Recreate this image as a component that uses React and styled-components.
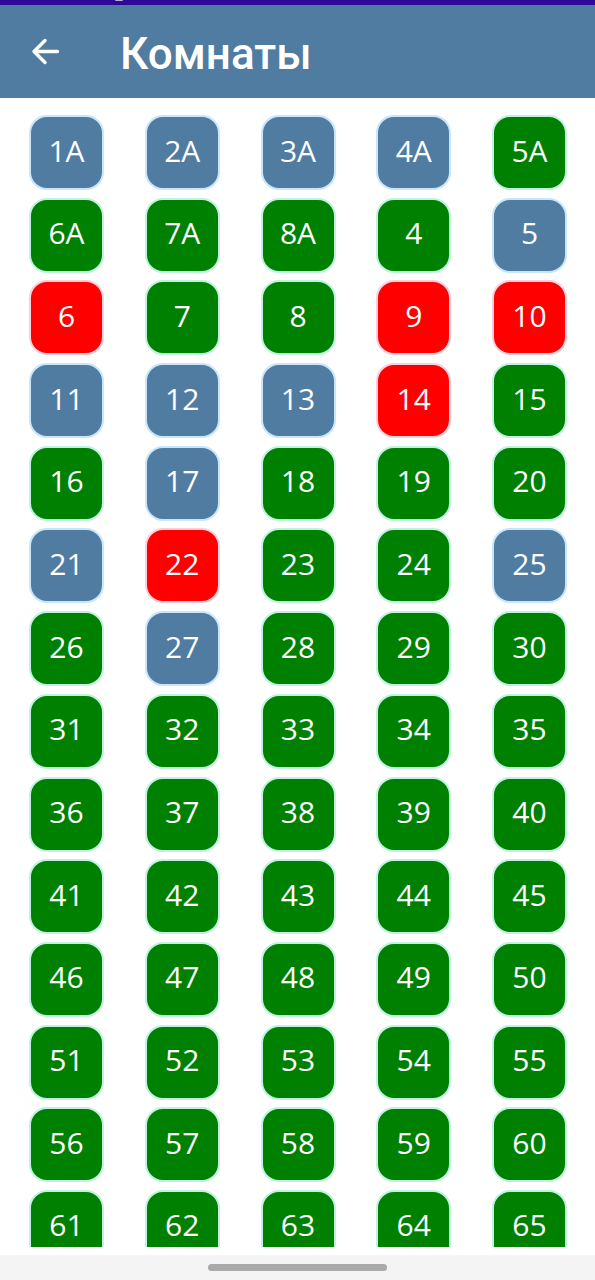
import React from "react";
import styled, { createGlobalStyle } from "styled-components";

const GlobalStyle = createGlobalStyle`
  *, *::before, *::after { box-sizing: border-box; }
  body { margin: 0; background: #ffffff; }
`;

const colors = {
  blue: { fill: "#507ca2", edge: "#c8e6fb" },
  green: { fill: "#008000", edge: "#c0f2e0" },
  red: { fill: "#ff0000", edge: "#f8d0dc" },
};

const Screen = styled.div`
  display: flex;
  flex-direction: column;
  height: 100vh;
  font-family: "Noto Sans", "Open Sans", sans-serif;
`;

const StatusBar = styled.div`
  flex: none;
  height: 5px;
  padding-left: 115px;
  background: #2c0a96;
`;

const StatusMark = styled.div`
  width: 8px;
  height: 1px;
  border-radius: 0 0 4px 4px;
  background: #b9addd;
`;

const AppBar = styled.header`
  flex: none;
  display: flex;
  align-items: center;
  gap: 52px;
  height: 93px;
  padding: 0 24px;
  background: #507ca2;
  color: #ffffff;
`;

const BackButton = styled.button`
  display: flex;
  padding: 0;
  border: 0;
  background: none;
  color: inherit;
  cursor: pointer;
`;

const Title = styled.h1`
  margin: 0;
  padding-top: 4px;
  font: 500 44px/52px Roboto, sans-serif;
`;

const RoomsView = styled.main`
  flex: 1;
  min-height: 0;
  padding: 17px 28px 0 29px;
  overflow-y: auto;
  scrollbar-width: none;
`;

const RoomGrid = styled.div`
  display: grid;
  grid-template-columns: repeat(5, 75px);
  grid-auto-rows: 75px;
  row-gap: 6px;
  justify-content: space-between;
  align-content: space-between;
  min-height: calc(100% + 18px);
`;

const RoomButton = styled.button`
  padding: 0 0 4px;
  border: 2px solid ${(p) => colors[p.$status].edge};
  border-radius: 18px;
  background: ${(p) => colors[p.$status].fill};
  color: #ffffff;
  font: 400 30px/40px "Open Sans", "Noto Sans", sans-serif;
  cursor: pointer;
`;

const NavigationBar = styled.footer`
  flex: none;
  display: flex;
  justify-content: center;
  align-items: center;
  height: 25px;
  margin-top: 8px;
  background: #f4f4f4;
`;

const HomeHandle = styled.div`
  width: 30%;
  height: 7px;
  border-radius: 4px;
  background: #a9a9a9;
`;

const blueRooms = ["1A", "2A", "3A", "4A", "5", "11", "12", "13", "17", "21", "25", "27"];
const redRooms = ["6", "9", "10", "14", "22"];

const rooms = [
  ...Array.from({ length: 8 }, (_, i) => `${i + 1}A`),
  ...Array.from({ length: 62 }, (_, i) => String(i + 4)),
];

const statusOf = (room) =>
  blueRooms.includes(room) ? "blue" : redRooms.includes(room) ? "red" : "green";

export default function App() {
  return (
    <Screen>
      <GlobalStyle />
      <StatusBar>
        <StatusMark />
      </StatusBar>
      <AppBar>
        <BackButton type="button" aria-label="Назад">
          <svg width="44" height="44" viewBox="0 0 44 44" fill="none" stroke="currentColor" strokeWidth="3.4" strokeLinecap="round" strokeLinejoin="round">
            <path d="M33.5 21.5H10M21 10.5L10 21.5L21 32.5" />
          </svg>
        </BackButton>
        <Title>Комнаты</Title>
      </AppBar>
      <RoomsView>
        <RoomGrid>
          {rooms.map((room) => (
            <RoomButton key={room} type="button" $status={statusOf(room)}>
              {room}
            </RoomButton>
          ))}
        </RoomGrid>
      </RoomsView>
      <NavigationBar>
        <HomeHandle />
      </NavigationBar>
    </Screen>
  );
}
